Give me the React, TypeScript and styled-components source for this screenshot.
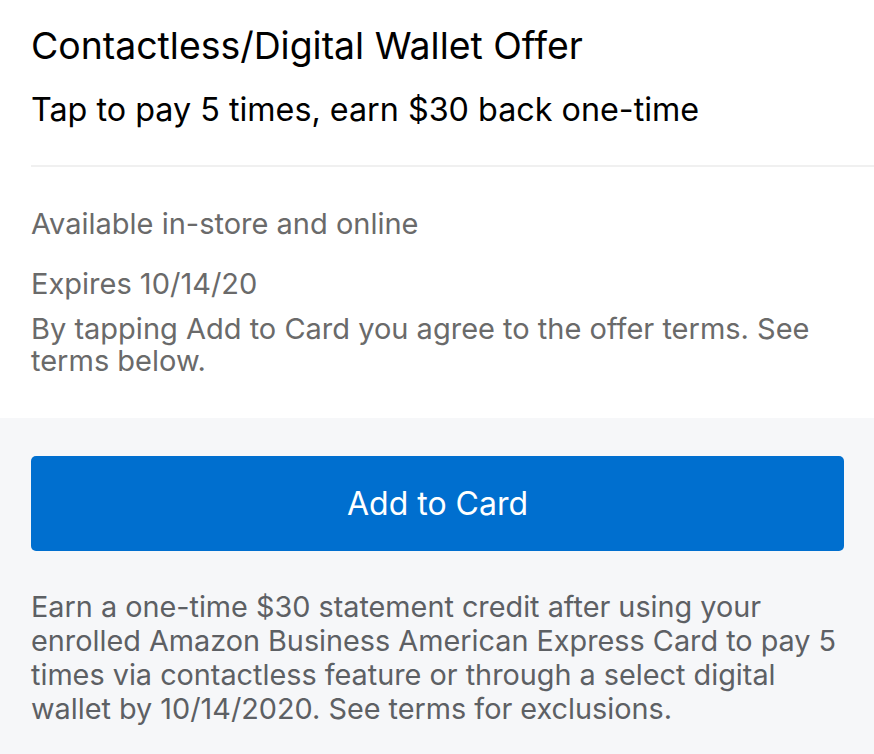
import React from 'react';
import styled, { createGlobalStyle } from 'styled-components';

const GlobalStyle = createGlobalStyle`
  html, body {
    margin: 0;
    padding: 0;
    background: #ffffff;
  }
  body {
    font-family: Inter, "Liberation Sans", sans-serif;
    -webkit-font-smoothing: antialiased;
  }
`;

const Page = styled.div`
  width: 874px;
  min-height: 754px;
  display: flex;
  flex-direction: column;
  background: #f6f7f9;
`;

const Header = styled.section`
  background: #ffffff;
  padding: 24px 0 0 31px;
`;

const Title = styled.h1`
  margin: 0;
  font-size: 37.4px;
  font-weight: 400;
  line-height: 44px;
  color: #000000;
`;

const Subtitle = styled.p`
  margin: 22px 0 0;
  font-size: 32.3px;
  line-height: 40px;
  color: #000000;
`;

const Divider = styled.hr`
  margin: 35px 0 0;
  border: 0;
  border-top: 2px solid #f0f0f0;
`;

const Details = styled.div`
  padding: 41px 40px 41px 0;
  display: flex;
  flex-direction: column;
`;

const Detail = styled.p<{ $gap?: number }>`
  margin: ${(p) => p.$gap ?? 0}px 0 0;
  font-size: 29px;
  line-height: 32px;
  color: #6a6a6a;
`;

const Actions = styled.section`
  padding: 38px 30px 0 31px;
`;

const AddButton = styled.button`
  display: block;
  width: 100%;
  height: 95px;
  border: 0;
  border-radius: 5px;
  background: #006fcf;
  color: #ffffff;
  font-family: Inter, sans-serif;
  font-size: 32px;
  cursor: pointer;
`;

const Terms = styled.p`
  margin: 39px 0 0;
  font-size: 28.8px;
  line-height: 34px;
  color: #5d6064;
`;

export default function App() {
  return (
    <>
      <GlobalStyle />
      <Page>
        <Header>
          <Title>Contactless/Digital Wallet Offer</Title>
          <Subtitle>Tap to pay 5 times, earn $30 back one-time</Subtitle>
          <Divider />
          <Details>
            <Detail>Available in-store and online</Detail>
            <Detail $gap={28}>Expires 10/14/20</Detail>
            <Detail $gap={13}>
              By tapping Add to Card you agree to the offer terms. See terms below.
            </Detail>
          </Details>
        </Header>
        <Actions>
          <AddButton>Add to Card</AddButton>
          <Terms>
            Earn a one-time $30 statement credit after using your enrolled Amazon Business
            American Express Card to pay 5 times via contactless feature or through a select
            digital wallet by 10/14/2020. See terms for exclusions.
          </Terms>
        </Actions>
      </Page>
    </>
  );
}
